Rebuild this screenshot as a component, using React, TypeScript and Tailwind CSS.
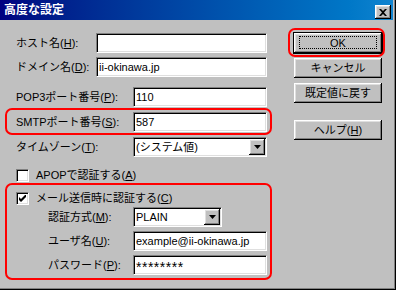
const field =
  "bg-white border border-t-[#808080] border-l-[#808080] border-r-white border-b-white shadow-[inset_1px_1px_0_#000,inset_-1px_-1px_0_#dfdfdf]";
const raised =
  "bg-[#c0c0c0] shadow-[inset_-1px_-1px_0_#000,inset_1px_1px_0_#fff,inset_-2px_-2px_0_#808080,inset_2px_2px_0_#dfdfdf]";

function Key({ k }: { k: string }) {
  return (
    <>
      (<span className="underline underline-offset-[1px]">{k}</span>)
    </>
  );
}

function TextBox({ value, w, className = "" }: { value?: string; w: string; className?: string }) {
  return (
    <div className={`${field} ${w} h-[20px] flex items-center pl-[2px] whitespace-nowrap overflow-hidden ${className}`}>
      {value}
    </div>
  );
}

function Combo({ value, w }: { value: string; w: string }) {
  return (
    <div className={`${field} ${w} h-[20px] flex items-center p-[1px] pl-[2px]`}>
      <span className="flex-1 whitespace-nowrap overflow-hidden">{value}</span>
      <div className={`${raised} w-[16px] h-full flex items-center justify-center`}>
        <svg width="7" height="4" viewBox="0 0 7 4">
          <polygon points="0,0 7,0 3.5,4" fill="#000" />
        </svg>
      </div>
    </div>
  );
}

function Check({ checked }: { checked?: boolean }) {
  return (
    <div className={`${field} w-[13px] h-[13px] flex items-center justify-center shrink-0`}>
      {checked && (
        <svg width="7" height="7" viewBox="0 0 7 7">
          <polygon points="0,2 2,4 7,-1 7,2 2,7 0,5" fill="#000" />
        </svg>
      )}
    </div>
  );
}

function Ring({ className }: { className: string }) {
  return (
    <div
      className={`absolute border-2 border-[#ff0000] rounded-[7px] pointer-events-none ${className}`}
    />
  );
}

function Row({
  label,
  lw,
  children,
  className = "",
}: {
  label: React.ReactNode;
  lw: string;
  children: React.ReactNode;
  className?: string;
}) {
  return (
    <div className={`flex items-center h-[20px] ${className}`}>
      <span className={`${lw} shrink-0 whitespace-nowrap`}>{label}</span>
      {children}
    </div>
  );
}

function Btn({ children, className = "" }: { children: React.ReactNode; className?: string }) {
  return (
    <div className={`${raised} w-[88px] h-[20px] flex items-center justify-center ${className}`}>
      {children}
    </div>
  );
}

export default function App() {
  return (
    <div className="w-[396px] h-[290px] bg-[#c0c0c0] overflow-hidden flex flex-col pr-[3px] pb-[3px] shadow-[inset_-1px_-1px_0_#000,inset_-2px_-2px_0_#808080] font-['Liberation_Sans','Noto_Sans_CJK_JP',sans-serif] text-[11px] leading-none text-black">
      <div className="h-[20px] shrink-0 flex items-start pl-[4px] pr-[2px] bg-linear-to-r from-[#000080] to-[#1084d0]">
        <span className="text-white text-[12px] font-bold leading-[20px]">高度な設定</span>
        <div className={`${raised} ml-auto mt-[5px] w-[16px] h-[14px] flex items-center justify-center`}>
          <svg width="8" height="7" viewBox="0 0 8 7">
            <path d="M0 0h2l2 2 2-2h2L5 3.5 8 7H6L4 5 2 7H0l3-3.5z" fill="#000" />
          </svg>
        </div>
      </div>

      <div className="flex flex-1">
        <div className="pl-[16px] pt-[13px] w-[267px] flex flex-col">
          <Row label={<>ホスト名<Key k="H" />:</>} lw="w-[80px]">
            <TextBox w="w-[171px]" />
          </Row>
          <Row label={<>ドメイン名<Key k="D" />:</>} lw="w-[80px]" className="mt-[4px]">
            <TextBox w="w-[171px]" value="ii-okinawa.jp" />
          </Row>
          <Row label={<>POP3ポート番号<Key k="P" />:</>} lw="w-[117px]" className="mt-[10px]">
            <TextBox w="w-[134px]" value="110" />
          </Row>
          <div className="relative mt-[5px]">
            <Row label={<>SMTPポート番号<Key k="S" />:</>} lw="w-[117px]">
              <TextBox w="w-[134px]" value="587" />
            </Row>
            <Ring className="-left-[11px] -right-[5px] -top-[4px] -bottom-[3px]" />
          </div>
          <Row label={<>タイムゾーン<Key k="T" />:</>} lw="w-[117px]" className="mt-[5px]">
            <Combo w="w-[134px]" value="(システム値)" />
          </Row>

          <div className="flex items-center gap-[7px] mt-[12px] h-[13px]">
            <Check />
            <span>APOPで認証する<Key k="A" /></span>
          </div>

          <div className="relative mt-[10px] flex flex-col">
            <div className="flex items-center gap-[7px] h-[13px]">
              <Check checked />
              <span>メール送信時に認証する<Key k="C" /></span>
            </div>
            <Row label={<>認証方式<Key k="M" />:</>} lw="w-[85px]" className="mt-[2px] pl-[32px]">
              <Combo w="w-[89px]" value="PLAIN" />
            </Row>
            <Row label={<>ユーザ名<Key k="U" />:</>} lw="w-[85px]" className="mt-[4px] pl-[32px]">
              <TextBox w="w-[134px]" value="example@ii-okinawa.jp" />
            </Row>
            <Row label={<>パスワード<Key k="P" />:</>} lw="w-[85px]" className="mt-[4px] pl-[32px]">
              <TextBox w="w-[134px]" value="********" className="text-[14px] pt-[3px] tracking-[0.5px]" />
            </Row>
            <Ring className="-left-[11px] -right-[5px] -top-[9px] -bottom-[5px]" />
          </div>
        </div>

        <div className="ml-[26px] pt-[12px] flex flex-col">
          <div className="relative w-[90px] h-[22px] border border-black">
            <div className={`${raised} relative w-full h-full flex items-center justify-center`}>
              OK
              <div className="absolute left-[5px] right-[5px] top-[3px] bottom-[4px] border border-dotted border-black" />
            </div>
            <Ring className="-left-[6px] -right-[3px] -top-[5px] -bottom-[4px]" />
          </div>
          <Btn className="ml-[1px] mt-[4px]">キャンセル</Btn>
          <Btn className="ml-[1px] mt-[5px]">既定値に戻す</Btn>
          <Btn className="ml-[1px] mt-[17px]">
            ヘルプ<Key k="H" />
          </Btn>
        </div>
      </div>
    </div>
  );
}
